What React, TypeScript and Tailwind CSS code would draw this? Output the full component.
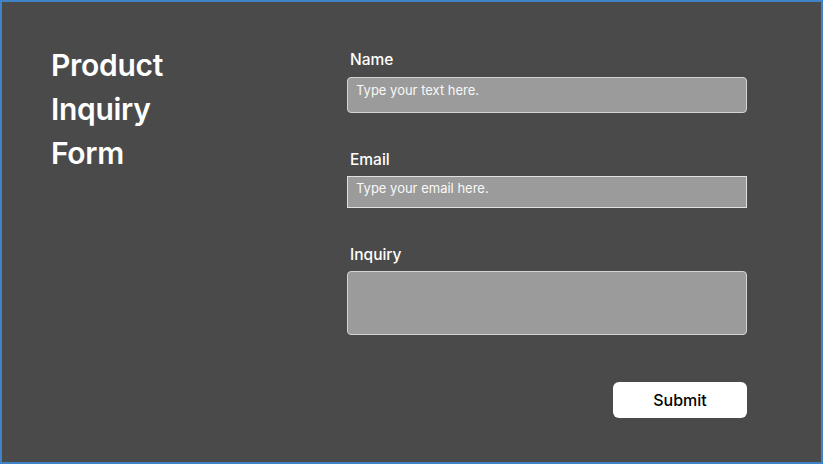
export default function App() {
  return (
    <div
      className="w-[823px] h-[464px] border-2 border-[#3f83c9] bg-[#4a4a4a] flex"
      style={{ fontFamily: 'Inter, "Noto Sans", sans-serif' }}
    >
      <div className="w-[345px] pl-[49px] pt-[41px] shrink-0">
        <h1 className="text-[30px] leading-[44px] font-semibold text-white tracking-[-0.3px]">
          Product
          <br />
          Inquiry
          <br />
          Form
        </h1>
      </div>

      <form className="w-[400px] pt-[48px] flex flex-col" onSubmit={(e) => e.preventDefault()}>
        <label className="block pl-[3px] text-[15.5px] leading-[20px] font-medium text-white">Name</label>
        <input
          type="text"
          placeholder="Type your text here."
          className="mt-[7px] h-[36px] w-full rounded-[4px] border border-[#d4d4d4] bg-[#9b9b9b] pl-[8px] pb-[10px] text-[13px] text-white placeholder:text-[#f8f8f8] outline-none"
        />

        <label className="mt-[37px] block pl-[3px] text-[15.5px] leading-[20px] font-medium text-white">Email</label>
        <input
          type="email"
          placeholder="Type your email here."
          className="mt-[6px] h-[32px] w-full border border-[#e0e0e0] bg-[#9b9b9b] pl-[8px] pb-[8px] text-[13px] text-white placeholder:text-[#f8f8f8] outline-none"
        />

        <label className="mt-[37px] block pl-[3px] text-[15.5px] leading-[20px] font-medium text-white">Inquiry</label>
        <textarea className="mt-[6px] h-[64px] w-full resize-none rounded-[4px] border border-[#d4d4d4] bg-[#9b9b9b] outline-none" />

        <div className="mt-[47px] flex justify-end">
          <button
            type="submit"
            className="h-[36px] w-[134px] rounded-[6px] bg-white text-[16px] font-medium text-black"
          >
            Submit
          </button>
        </div>
      </form>
    </div>
  )
}
